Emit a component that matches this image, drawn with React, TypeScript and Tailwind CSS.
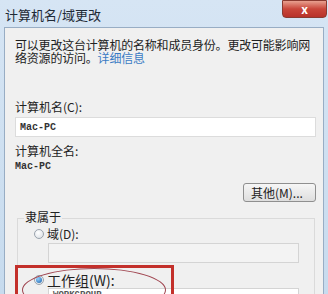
import React from "react";

const ui = { fontFamily: '"Noto Sans CJK SC", "Noto Sans", sans-serif' };
const mono = { fontFamily: '"Liberation Mono", "DejaVu Sans Mono", monospace' };

function Radio({ checked }: { checked?: boolean }) {
	return (
		<span className="w-[10px] h-[10px] rounded-full border border-[#9aa3ad] bg-[radial-gradient(circle_at_40%_35%,#ffffff,#d8dde3)] flex items-center justify-center shrink-0">
			{checked && <span className="w-[6px] h-[6px] rounded-full bg-[radial-gradient(circle_at_35%_30%,#8fd0ff,#1c5fa8)]" />}
		</span>
	);
}

export default function App() {
	return (
		<div
			className="w-[328px] h-[294px] overflow-hidden bg-[linear-gradient(180deg,#d6e5f4,#c7dbee)] flex flex-col relative"
			style={ui}
		>
			<div className="h-[27px] shrink-0 flex items-start justify-between pl-[5px]">
				<p className="text-[13px] leading-none mt-[8px] text-[#1e2a36]">计算机名/域更改</p>
				<div className="w-[45px] h-[18px] mr-[1px] rounded-b-[4px] border border-[#8a3a30] bg-[linear-gradient(180deg,#e8a08f,#c9463a_50%,#b8322a)] flex items-center justify-center text-white text-[12px] font-bold leading-none">
					x
				</div>
			</div>
			<div className="flex-1 ml-[4px] mr-[4px] bg-[#f0f0f0] border border-[#98adc4] border-b-0 pl-[10px] pr-[7px] pt-[10px] text-[#222]">
				<p className="text-[12px] leading-[13px] tracking-[-0.2px]">
					可以更改这台计算机的名称和成员身份。更改可能影响网络资源的访问。
					<span className="text-[#3a7bc4]">详细信息</span>
				</p>
				<p className="text-[12px] leading-none mt-[37px]">计算机名(C):</p>
				<div className="mt-[4px] h-[20px] bg-white border border-[#dcdcdc] flex items-center pl-[4px] text-[10px] font-bold text-[#333]" style={mono}>
					Mac-PC
				</div>
				<p className="text-[12px] leading-none mt-[8px]">计算机全名:</p>
				<p className="text-[10px] font-bold leading-none mt-[5px] text-[#333]" style={mono}>
					Mac-PC
				</p>
				<div className="flex justify-end mt-[11px]">
					<div className="w-[73px] h-[19px] rounded-[3px] border border-[#8f8f8f] bg-[linear-gradient(180deg,#f6f6f6,#dedede)] flex items-center pl-[7px] text-[12px] leading-none">
						其他(M)...
					</div>
				</div>
				<div className="relative mt-[16px] ml-[2px] mr-[1px] border border-[#dadada] h-[100px] pl-[16px] pr-[15px] pt-[9px]">
					<span className="absolute -top-[8px] left-[6px] bg-[#f0f0f0] px-[1px] text-[12px] leading-none">隶属于</span>
					<div className="flex items-center gap-[3px] text-[12px] leading-none">
						<Radio />
						<span>域(D):</span>
					</div>
					<div className="mt-[3px] ml-[14px] h-[20px] border border-[#d4d4d4] bg-[#f3f3f3]" />
					<div className="flex items-center gap-[3px] text-[14px] leading-none mt-[10px]">
						<Radio checked />
						<span>工作组(W):</span>
					</div>
					<div className="mt-[1px] ml-[14px] h-[20px] border border-[#d4d4d4] bg-white pl-[4px] text-[9px] leading-[12px] font-bold text-[#555]" style={mono}>
						WORKGROUP
					</div>
				</div>
			</div>
			<div className="absolute left-[15px] top-[265px] w-[159px] h-[40px] border-[3px] border-[#c3302b]" />
			<div className="absolute left-[22px] top-[268px] w-[144px] h-[44px] rounded-[50%] border border-[#a04550]" />
		</div>
	);
}
